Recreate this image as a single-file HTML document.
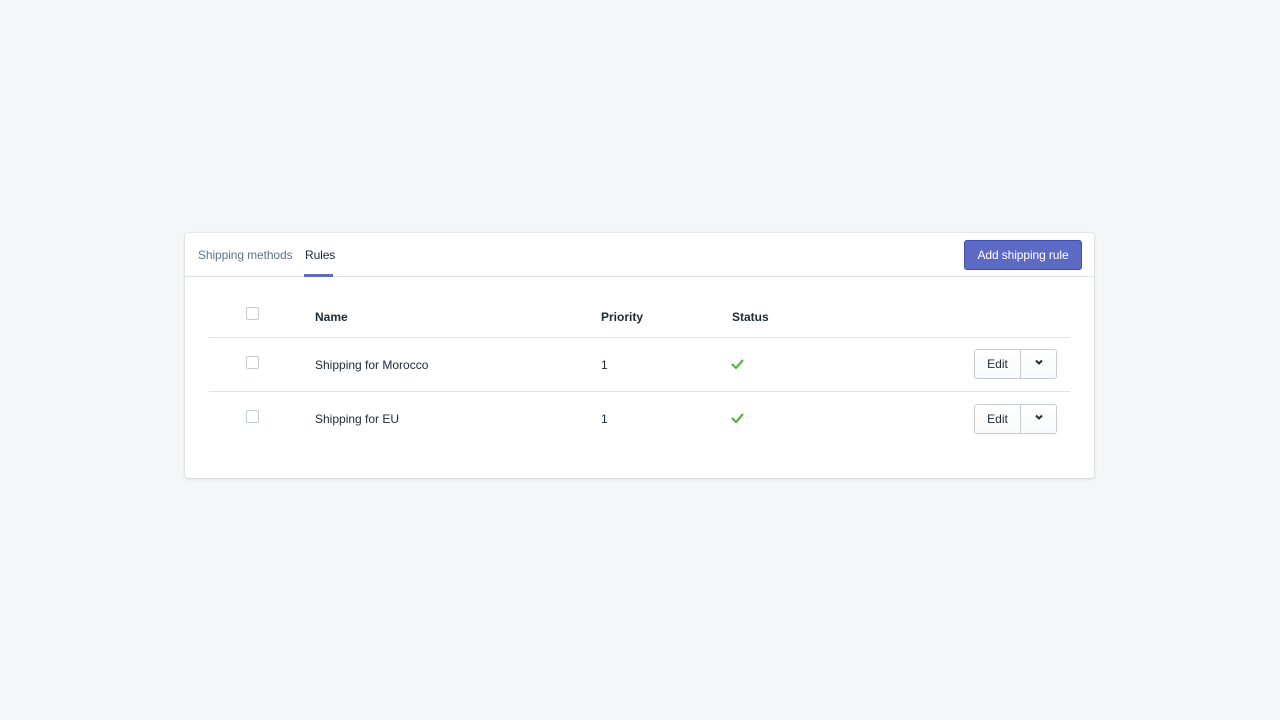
<!DOCTYPE html>
<html><head><style>
*{box-sizing:border-box;margin:0;padding:0}
body{width:1280px;height:720px;background:#f4f6f8;font-family:"Liberation Sans",sans-serif;font-size:12px;color:#212b36;position:relative}
.card{position:absolute;left:185px;top:233px;width:909px;height:245px;background:#fff;border-radius:3px;box-shadow:0 0 0 1px rgba(63,63,68,.05),0 1px 3px rgba(63,63,68,.15)}
.tabs{height:44px;border-bottom:1px solid #dfe3e8;position:relative}
.tab{position:absolute;top:15px;font-size:12px;letter-spacing:-0.1px}
.t1{left:13px;color:#637381}
.t2{left:120px;color:#212b36}
.ul{position:absolute;left:119px;top:41px;width:29px;height:3px;background:#5c6ac4}
.btn{position:absolute;left:779px;top:7px;width:118px;height:30px;background:#5c6ac4;border:1px solid #3f4eae;border-radius:3px;color:#fff;text-align:center;line-height:28px;font-size:12px;letter-spacing:-0.1px}
.cb{position:absolute;left:61px;width:13px;height:13px;border:1px solid #c4cdd5;border-radius:2px;background:#fff}
.abs{position:absolute}
.hr{position:absolute;left:24px;width:861px;height:1px;background:#dfe3e8}
.b{font-weight:bold}
.eb{position:absolute;left:789px;width:83px;height:30px;border:1px solid #c4cdd5;border-radius:3px;background:linear-gradient(#fff,#f9fafb);display:flex}
.eb div:first-child{width:46px;border-right:1px solid #c4cdd5;text-align:center;line-height:28px;font-size:12px}
.eb div:last-child{flex:1;position:relative}
.eb svg{position:absolute;left:14px;top:9px}
</style></head><body>
<div class="card">
<div class="tabs"><span class="tab t1">Shipping methods</span><span class="tab t2">Rules</span><div class="ul"></div><div class="btn">Add shipping rule</div></div>
<div class="cb" style="top:74px"></div>
<div class="abs b" style="left:130px;top:77px">Name</div>
<div class="abs b" style="left:416px;top:77px">Priority</div>
<div class="abs b" style="left:547px;top:77px">Status</div>
<div class="hr" style="top:104px"></div>
<div class="cb" style="top:123px"></div>
<div class="abs" style="left:130px;top:125px">Shipping for Morocco</div>
<div class="abs" style="left:416px;top:125px">1</div>
<svg class="abs" style="left:546px;top:126px" width="13" height="10" viewBox="0 0 13 10"><path d="M1 5l4 4 7-8" stroke="#50b83c" stroke-width="2.2" fill="none"/></svg>
<div class="eb" style="top:116px"><div>Edit</div><div><svg width="8" height="6" viewBox="0 0 8 6"><path d="M1 1.5l3 3 3-3" stroke="#212b36" stroke-width="2" fill="none"/></svg></div></div>
<div class="hr" style="top:158px"></div>
<div class="cb" style="top:177px"></div>
<div class="abs" style="left:130px;top:179px">Shipping for EU</div>
<div class="abs" style="left:416px;top:179px">1</div>
<svg class="abs" style="left:546px;top:180px" width="13" height="10" viewBox="0 0 13 10"><path d="M1 5l4 4 7-8" stroke="#50b83c" stroke-width="2.2" fill="none"/></svg>
<div class="eb" style="top:171px"><div>Edit</div><div><svg width="8" height="6" viewBox="0 0 8 6"><path d="M1 1.5l3 3 3-3" stroke="#212b36" stroke-width="2" fill="none"/></svg></div></div>
</div>
</body></html>
